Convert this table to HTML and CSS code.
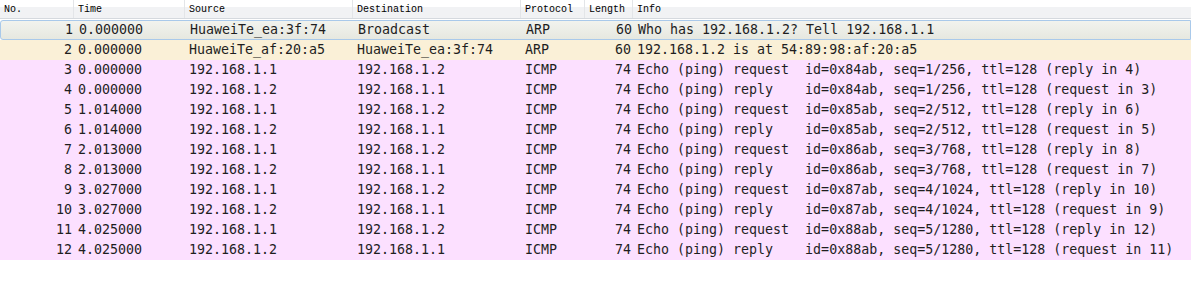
FILE: index.html
```html
<!DOCTYPE html>
<html lang="en">
<head>
    <meta charset="UTF-8">
    <title>Packet List</title>
    <link rel="stylesheet" href="styles.css">
</head>
<body>
    <div class="packet-list">
        <div class="header">
            <div class="col">No.</div>
            <div class="col">Time</div>
            <div class="col">Source</div>
            <div class="col">Destination</div>
            <div class="col">Protocol</div>
            <div class="col">Length</div>
            <div class="col last">Info</div>
        </div>
        <div id="rows"></div>
    </div>

    <script>
        const packets = [
            [1, "0.000000", "HuaweiTe_ea:3f:74", "Broadcast", "ARP", 60, "Who has 192.168.1.2? Tell 192.168.1.1"],
            [2, "0.000000", "HuaweiTe_af:20:a5", "HuaweiTe_ea:3f:74", "ARP", 60, "192.168.1.2 is at 54:89:98:af:20:a5"],
            [3, "0.000000", "192.168.1.1", "192.168.1.2", "ICMP", 74, "Echo (ping) request  id=0x84ab, seq=1/256, ttl=128 (reply in 4)"],
            [4, "0.000000", "192.168.1.2", "192.168.1.1", "ICMP", 74, "Echo (ping) reply    id=0x84ab, seq=1/256, ttl=128 (request in 3)"],
            [5, "1.014000", "192.168.1.1", "192.168.1.2", "ICMP", 74, "Echo (ping) request  id=0x85ab, seq=2/512, ttl=128 (reply in 6)"],
            [6, "1.014000", "192.168.1.2", "192.168.1.1", "ICMP", 74, "Echo (ping) reply    id=0x85ab, seq=2/512, ttl=128 (request in 5)"],
            [7, "2.013000", "192.168.1.1", "192.168.1.2", "ICMP", 74, "Echo (ping) request  id=0x86ab, seq=3/768, ttl=128 (reply in 8)"],
            [8, "2.013000", "192.168.1.2", "192.168.1.1", "ICMP", 74, "Echo (ping) reply    id=0x86ab, seq=3/768, ttl=128 (request in 7)"],
            [9, "3.027000", "192.168.1.1", "192.168.1.2", "ICMP", 74, "Echo (ping) request  id=0x87ab, seq=4/1024, ttl=128 (reply in 10)"],
            [10, "3.027000", "192.168.1.2", "192.168.1.1", "ICMP", 74, "Echo (ping) reply    id=0x87ab, seq=4/1024, ttl=128 (request in 9)"],
            [11, "4.025000", "192.168.1.1", "192.168.1.2", "ICMP", 74, "Echo (ping) request  id=0x88ab, seq=5/1280, ttl=128 (reply in 12)"],
            [12, "4.025000", "192.168.1.2", "192.168.1.1", "ICMP", 74, "Echo (ping) reply    id=0x88ab, seq=5/1280, ttl=128 (request in 11)"]
        ];

        const rowsContainer = document.getElementById('rows');

        packets.forEach((p, i) => {
            const row = document.createElement('div');
            row.className = 'row ' + p[4].toLowerCase() + (i === 0 ? ' selected' : '');
            row.innerHTML = `
                <div class="cell num">${p[0]}</div>
                <div class="cell">${p[1]}</div>
                <div class="cell">${p[2]}</div>
                <div class="cell">${p[3]}</div>
                <div class="cell">${p[4]}</div>
                <div class="cell num">${p[5]}</div>
                <div class="cell">${p[6]}</div>
            `;
            rowsContainer.appendChild(row);
        });
    </script>
</body>
</html>
```

FILE: styles.css
```css
* {
    margin: 0;
    padding: 0;
    box-sizing: border-box;
}

body {
    background: #ffffff;
    color: #1e1e1e;
    width: 1191px;
    height: 282px;
    overflow: hidden;
}

.header,
.row {
    display: grid;
    grid-template-columns: 74px 111px 168px 168px 64px 48px 1fr;
}

.header {
    height: 20px;
    background: linear-gradient(#ffffff 0, #ffffff 7px, #f1f2f4 7px, #f1f2f4 18px, #d5d9de 18px, #d5d9de 19px, #ffffff 19px);
    font-family: 'Liberation Mono', monospace;
    font-size: 10px;
    color: #000;
}

.header .col {
    padding: 4px 0 0 4px;
    height: 18px;
    border-right: 1px solid #e3e5e8;
}

.header .col.last {
    border-right: none;
}

.row {
    height: 20px;
    font-family: 'DejaVu Sans Mono', monospace;
    font-size: 13.3px;
    line-height: 20px;
    white-space: pre;
}

.cell {
    padding-left: 4px;
    overflow: hidden;
}

.cell.num {
    text-align: right;
    padding-right: 2px;
    padding-left: 0;
}

.row.arp {
    background: #faf0d7;
}

.row.icmp {
    background: #fce0ff;
}

.row.selected {
    background: linear-gradient(#f2f3ee, #e6e8e0);
    border: 1px solid #a9c9ea;
    border-radius: 3px 0 0 3px;
    line-height: 18px;
}
```
